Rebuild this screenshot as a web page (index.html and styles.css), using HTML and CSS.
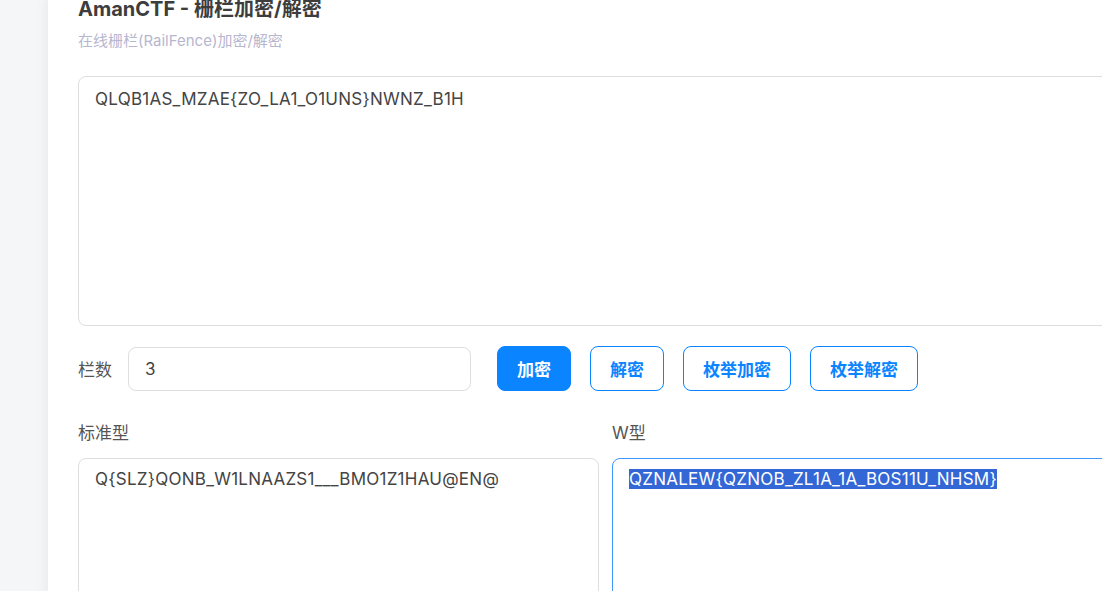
FILE: index.html
```html
<!DOCTYPE html>
<html lang="zh-CN">
<head>
<meta charset="utf-8">
<title>AmanCTF - 栅栏加密/解密</title>
<link rel="stylesheet" href="styles.css">
</head>
<body>
<div class="page">
  <main class="panel">
    <h1 class="title">AmanCTF - 栅栏加密/解密</h1>
    <p class="subtitle">在线栅栏(RailFence)加密/解密</p>
    <div class="box box-main">QLQB1AS_MZAE{ZO_LA1_O1UNS}NWNZ_B1H</div>
    <div class="controls">
      <label class="ctl-label">栏数</label>
      <div class="input">3</div>
      <button class="btn btn-primary">加密</button>
      <button class="btn btn-outline">解密</button>
      <button class="btn btn-outline">枚举加密</button>
      <button class="btn btn-outline">枚举解密</button>
    </div>
    <div class="results">
      <div class="col">
        <div class="col-label">标准型</div>
        <div class="box box-result">Q{SLZ}QONB_W1LNAAZS1___BMO1Z1HAU@EN@</div>
      </div>
      <div class="col">
        <div class="col-label">W型</div>
        <div class="box box-result box-focus"><span class="sel">QZNALEW{QZNOB_ZL1A_1A_BOS11U_NHSM}</span></div>
      </div>
    </div>
  </main>
</div>
</body>
</html>
```

FILE: styles.css
```css
html, body {
  margin: 0;
  padding: 0;
  height: 100%;
  overflow: hidden;
}
body {
  background: #f5f6f8;
  font-family: Inter, "Noto Sans CJK SC", sans-serif;
  color: #444;
}
.page {
  padding-left: 48px;
  min-height: 100%;
}
.panel {
  background: #fff;
  box-shadow: 0 0 14px rgba(0, 0, 0, 0.07);
  padding: 0 30px 40px 30px;
  width: 1055px;
  min-height: 600px;
}
.title {
  margin: -6px 0 0 0;
  font-size: 20px;
  font-weight: 700;
  line-height: 30px;
  color: #3d3d3d;
}
.subtitle {
  margin: 7px 0 0 0;
  font-size: 15px;
  line-height: 20px;
  color: #b7b6cf;
}
.box {
  box-sizing: border-box;
  border: 1px solid #dedede;
  border-radius: 8px;
  padding: 11px 16px;
  font-size: 17px;
  line-height: 23px;
  letter-spacing: 0.25px;
  color: #444;
  background: #fff;
}
.box-main {
  margin-top: 25px;
  height: 250px;
}
.controls {
  display: flex;
  align-items: center;
  margin-top: 20px;
}
.ctl-label {
  font-size: 17px;
  color: #555;
  width: 50px;
  flex: none;
}
.input {
  box-sizing: border-box;
  width: 343px;
  height: 44px;
  border: 1px solid #dedede;
  border-radius: 8px;
  padding: 0 16px;
  display: flex;
  align-items: center;
  font-size: 17px;
  color: #444;
  margin-right: 26px;
}
.btn {
  box-sizing: border-box;
  height: 45px;
  padding: 0 19px;
  border-radius: 8px;
  font-family: inherit;
  font-size: 17px;
  font-weight: 700;
  margin-right: 19px;
  cursor: pointer;
}
.btn-primary {
  background: #0a84ff;
  border: 1px solid #0a84ff;
  color: #fff;
}
.btn-outline {
  background: #fff;
  border: 1px solid #0a84ff;
  color: #0a84ff;
}
.results {
  display: grid;
  grid-template-columns: 521px 521px;
  column-gap: 13px;
  margin-top: 31px;
}
.col-label {
  font-size: 17px;
  line-height: 22px;
  color: #555;
}
.box-result {
  margin-top: 14px;
  height: 200px;
  padding: 9px 16px;
}
.box-focus {
  border-color: #3e97ff;
}
.sel {
  background: #3367d6;
  color: #fff;
}
```
